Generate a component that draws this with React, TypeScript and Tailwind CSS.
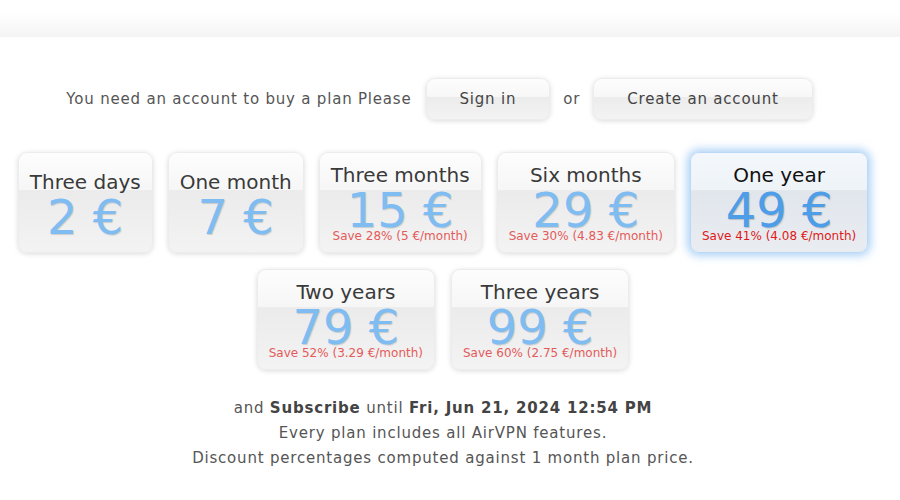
import React from "react";

type Plan = {
  title: string;
  price: string;
  save?: string;
  featured?: boolean;
};

const rowOne: Plan[] = [
  { title: "Three days", price: "2 €" },
  { title: "One month", price: "7 €" },
  { title: "Three months", price: "15 €", save: "Save 28% (5 €/month)" },
  { title: "Six months", price: "29 €", save: "Save 30% (4.83 €/month)" },
  { title: "One year", price: "49 €", save: "Save 41% (4.08 €/month)", featured: true },
];

const rowTwo: Plan[] = [
  { title: "Two years", price: "79 €", save: "Save 52% (3.29 €/month)" },
  { title: "Three years", price: "99 €", save: "Save 60% (2.75 €/month)" },
];

function PlanCard({ plan }: { plan: Plan }) {
  const featured = plan.featured;
  return (
    <div
      className={
        featured
          ? "flex h-[101px] flex-col items-center justify-center rounded-[9px] border border-[#b9d9f7] bg-[linear-gradient(to_bottom,#f4f8fc_0%,#eef3f8_37%,#e1e6ec_38%,#e9edf2_100%)] px-[11px] shadow-[0_0_9px_3px_rgba(110,175,240,0.55)]"
          : "flex h-[101px] flex-col items-center justify-center rounded-[9px] border border-[#ececec] bg-[linear-gradient(to_bottom,#fdfdfd_0%,#f6f6f6_37%,#ebebeb_38%,#f3f3f3_100%)] px-[11px] shadow-[0_1px_5px_rgba(0,0,0,0.15)]"
      }
    >
      <div
        className={
          featured
            ? "text-[20px] leading-[24px] whitespace-nowrap text-[#111]"
            : "text-[20px] leading-[24px] whitespace-nowrap text-[#3a3a3a]"
        }
      >
        {plan.title}
      </div>
      <div
        className={
          featured
            ? "mt-[4px] text-[48px] leading-[38px] whitespace-nowrap text-[#4d9de8] [text-shadow:1px_1px_1px_rgba(0,0,0,0.18)]"
            : "mt-[4px] text-[48px] leading-[38px] whitespace-nowrap text-[#7fbcf2] [text-shadow:1px_1px_1px_rgba(0,0,0,0.15)]"
        }
      >
        {plan.price}
      </div>
      {plan.save && (
        <div
          className={
            featured
              ? "mt-[1px] text-[12px] leading-[12px] whitespace-nowrap text-[#e01818]"
              : "mt-[1px] text-[12px] leading-[12px] whitespace-nowrap text-[#e45a5a]"
          }
        >
          {plan.save}
        </div>
      )}
    </div>
  );
}

function GlossButton({ children }: { children: React.ReactNode }) {
  return (
    <button
      type="button"
      className="h-[42px] rounded-[9px] border border-[#ececec] bg-[linear-gradient(to_bottom,#fdfdfd_0%,#f7f7f7_45%,#ececec_46%,#f3f3f3_100%)] px-[33px] text-[15px] tracking-[0.8px] text-[#444] shadow-[0_1px_5px_rgba(0,0,0,0.15)]"
    >
      {children}
    </button>
  );
}

export default function App() {
  return (
    <div className="min-h-[500px] bg-white font-['DejaVu_Sans',Verdana,sans-serif] text-[#555]">
      <div className="pt-[13px]">
        <div className="h-[24px] bg-[linear-gradient(to_bottom,#ffffff,#f3f3f3)]" />
      </div>

      <div className="w-[886px]">
        <div className="mt-[41px] flex items-center justify-center pr-[7px] text-[15px] tracking-[0.8px]">
          <span className="mr-[14px]">You need an account to buy a plan Please</span>
          <GlossButton>Sign in</GlossButton>
          <span className="mx-[13px]">or</span>
          <GlossButton>Create an account</GlossButton>
        </div>

        <div className="mt-[32px] flex justify-center gap-[15px]">
          {rowOne.map((p) => (
            <PlanCard key={p.title} plan={p} />
          ))}
        </div>
        <div className="mt-[16px] flex justify-center gap-[16px]">
          {rowTwo.map((p) => (
            <PlanCard key={p.title} plan={p} />
          ))}
        </div>

        <div className="mt-[26px] text-center text-[15px] leading-[25px] tracking-[0.8px]">
          <div>
            and <b className="text-[#444]">Subscribe</b> until{" "}
            <b className="text-[#444]">Fri, Jun 21, 2024 12:54 PM</b>
          </div>
          <div>Every plan includes all AirVPN features.</div>
          <div>Discount percentages computed against 1 month plan price.</div>
        </div>
      </div>
    </div>
  );
}
